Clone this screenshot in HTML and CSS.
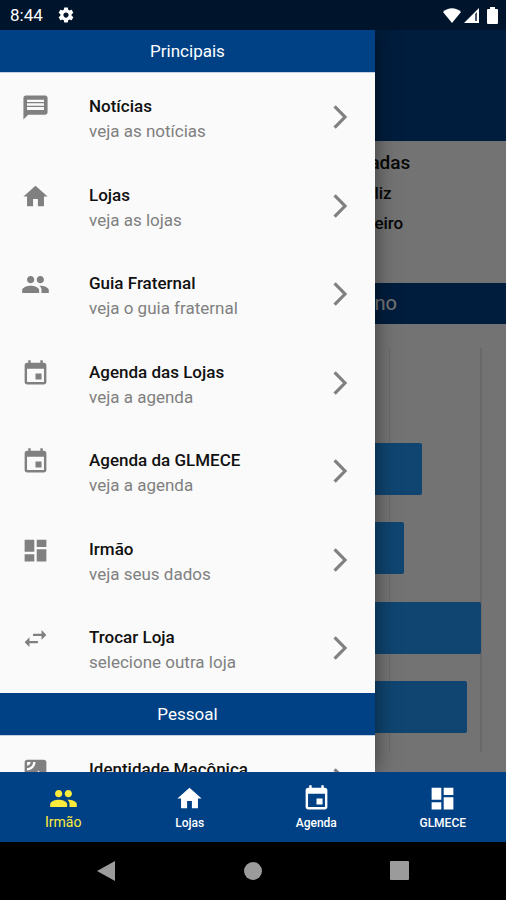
FILE: index.html
```html
<!DOCTYPE html>
<html lang="pt-BR">
<head>
    <meta charset="UTF-8">
    <meta name="viewport" content="width=device-width, initial-scale=1.0">
    <title>GLMECE</title>
    <link rel="stylesheet" href="styles.css">
</head>
<body>
    <svg class="sprite" aria-hidden="true">
        <symbol id="i-message" viewBox="0 0 24 24"><path d="M20 2H4c-1.100 0-1.990.9-1.990 2L2 22l4-4h14c1.100 0 2-.9 2-2V4c0-1.100-.9-2-2-2zm-1 12H5v-2.500h14zm0-3.500H5v-2h14zm0-3H5v-2h14z"/></symbol>
        <symbol id="i-home" viewBox="0 0 24 24"><path d="M10 20v-6h4v6h5v-8h3L12 3 2 12h3v8z"/></symbol>
        <symbol id="i-people" viewBox="0 0 24 24"><path d="M16 11c1.660 0 2.990-1.340 2.990-3S17.660 5 16 5s-3 1.340-3 3 1.340 3 3 3zM8 11c1.660 0 2.990-1.340 2.990-3S9.660 5 8 5 5 6.340 5 8s1.340 3 3 3zm0 2c-2.330 0-7 1.170-7 3.500V19h14v-2.500C15 14.170 10.330 13 8 13zm8 0c-.29 0-.62.02-.97.05 1.160.84 1.970 1.970 1.970 3.450V19h6v-2.500c0-2.330-4.670-3.500-7-3.500z"/></symbol>
        <symbol id="i-event" viewBox="0 0 24 24"><path d="M17 12h-5v5h5v-5zM16 1v2H8V1H6v2H5c-1.110 0-1.990.9-1.990 2L3 19c0 1.100.89 2 2 2h14c1.100 0 2-.9 2-2V5c0-1.100-.9-2-2-2h-1V1h-2zm3 18H5V8h14v11z"/></symbol>
        <symbol id="i-dashboard" viewBox="0 0 24 24"><path d="M3 13h8V3H3v10zm0 8h8v-6H3v6zm10 0h8V11h-8v10zm0-18v6h8V3h-8z"/></symbol>
        <symbol id="i-swap" viewBox="0 0 24 24"><path d="M6.990 11L3 15l3.990 4v-3H14v-2H6.990v-3zM21 9l-3.990-4v3H10v2h7.010v3L21 9z"/></symbol>
        <symbol id="i-satellite" viewBox="0 0 24 24"><path d="M19 3H5c-1.100 0-2 .9-2 2v14c0 1.100.9 2 2 2h14c1.100 0 2-.9 2-2V5c0-1.100-.9-2-2-2zM5 4.990h3C8 6.650 6.660 8 5 8V4.990zM5 12v-2c2.760 0 5-2.250 5-5.010h2C12 8.860 8.870 12 5 12zm0 6l3.500-4.500 2.500 3.010L14.500 12l4.500 6H5z"/></symbol>
        <symbol id="i-chevron" viewBox="0 0 24 24"><path d="M9.800 6.700L15 12l-5.200 5.300" fill="none" stroke="currentColor" stroke-width="1.600"/></symbol>
        <symbol id="i-gear" viewBox="0 0 24 24"><path d="M19.430 12.980c.04-.32.07-.64.07-.98s-.03-.66-.07-.98l2.110-1.650c.19-.15.24-.42.12-.64l-2-3.460c-.12-.22-.39-.3-.61-.22l-2.490 1c-.52-.4-1.080-.73-1.690-.98l-.38-2.650C14.460 2.180 14.250 2 14 2h-4c-.25 0-.46.18-.49.42l-.38 2.650c-.61.25-1.170.59-1.690.98l-2.490-1c-.23-.09-.49 0-.61.22l-2 3.460c-.13.22-.07.49.12.64l2.110 1.650c-.04.32-.07.65-.07.98s.03.66.07.98l-2.110 1.650c-.19.15-.24.42-.12.64l2 3.460c.12.22.39.3.61.22l2.490-1c.52.4 1.080.73 1.690.98l.38 2.650c.03.24.24.42.49.42h4c.25 0 .46-.18.49-.42l.38-2.650c.61-.25 1.170-.59 1.690-.98l2.490 1c.23.09.49 0 .61-.22l2-3.460c.12-.22.07-.49-.12-.64l-2.110-1.650zM12 15.500c-1.930 0-3.500-1.570-3.500-3.500s1.570-3.500 3.500-3.500 3.500 1.570 3.500 3.500-1.570 3.500-3.500 3.500z"/></symbol>
    </svg>

    <div class="phone">
        <header class="status-bar">
            <span class="clock">8:44</span>
            <svg class="gear"><use href="#i-gear"/></svg>
            <div class="status-icons">
                <svg class="wifi" viewBox="0 0 18 15"><path d="M0 4C5-1 13-1 18 4L9 15z"/></svg>
                <svg class="signal" viewBox="0 0 15 15"><path d="M0 15L15 0v15z"/><path class="signal-gap" d="M11 6l2-2v9h-2z"/></svg>
                <svg class="battery" viewBox="0 0 11 17"><path d="M3 0h5v2h2q1 0 1 1v13q0 1-1 1H1q-1 0-1-1V3q0-1 1-1h2z"/></svg>
            </div>
        </header>

        <div class="screen">
            <main class="page">
                <div class="app-bar"></div>
                <div class="summary">
                    <h2>adas</h2>
                    <p>liz</p>
                    <p>eiro</p>
                </div>
                <h3 class="chart-title">no</h3>
                <div class="chart">
                    <div class="plot">
                        <div class="bar" style="width: 60%"></div>
                        <div class="bar" style="width: 87%"></div>
                        <div class="bar" style="width: 83%"></div>
                        <div class="bar" style="width: 100%"></div>
                        <div class="bar" style="width: 97%"></div>
                    </div>
                </div>
            </main>
            <div class="scrim"></div>

            <nav class="drawer">
                <h2 class="section">Principais</h2>
                <div class="menu">
                    <a class="item" href="#"><svg class="icon"><use href="#i-message"/></svg><span class="text"><b>Notícias</b><small>veja as notícias</small></span><svg class="chevron"><use href="#i-chevron"/></svg></a>
                    <a class="item" href="#"><svg class="icon"><use href="#i-home"/></svg><span class="text"><b>Lojas</b><small>veja as lojas</small></span><svg class="chevron"><use href="#i-chevron"/></svg></a>
                    <a class="item" href="#"><svg class="icon"><use href="#i-people"/></svg><span class="text"><b>Guia Fraternal</b><small>veja o guia fraternal</small></span><svg class="chevron"><use href="#i-chevron"/></svg></a>
                    <a class="item" href="#"><svg class="icon"><use href="#i-event"/></svg><span class="text"><b>Agenda das Lojas</b><small>veja a agenda</small></span><svg class="chevron"><use href="#i-chevron"/></svg></a>
                    <a class="item" href="#"><svg class="icon"><use href="#i-event"/></svg><span class="text"><b>Agenda da GLMECE</b><small>veja a agenda</small></span><svg class="chevron"><use href="#i-chevron"/></svg></a>
                    <a class="item" href="#"><svg class="icon"><use href="#i-dashboard"/></svg><span class="text"><b>Irmão</b><small>veja seus dados</small></span><svg class="chevron"><use href="#i-chevron"/></svg></a>
                    <a class="item" href="#"><svg class="icon"><use href="#i-swap"/></svg><span class="text"><b>Trocar Loja</b><small>selecione outra loja</small></span><svg class="chevron"><use href="#i-chevron"/></svg></a>
                </div>
                <h2 class="section">Pessoal</h2>
                <a class="item" href="#"><svg class="icon"><use href="#i-satellite"/></svg><span class="text"><b>Identidade Maçônica</b></span><svg class="chevron"><use href="#i-chevron"/></svg></a>
            </nav>
        </div>

        <nav class="tabs">
            <button class="tab active"><svg><use href="#i-people"/></svg>Irmão</button>
            <button class="tab"><svg><use href="#i-home"/></svg>Lojas</button>
            <button class="tab"><svg><use href="#i-event"/></svg>Agenda</button>
            <button class="tab"><svg><use href="#i-dashboard"/></svg>GLMECE</button>
        </nav>

        <footer class="system-nav">
            <button aria-label="Voltar"><svg viewBox="0 0 20 22"><path d="M0 11L18 1v20z"/></svg></button>
            <button aria-label="Início"><svg viewBox="0 0 20 22"><circle cx="10" cy="11" r="9"/></svg></button>
            <button aria-label="Recentes"><svg viewBox="0 0 20 22"><rect x="1" y="1" width="19" height="19" rx="1"/></svg></button>
        </footer>
    </div>
</body>
</html>
```
FILE: styles.css
```css
* {
    box-sizing: border-box;
}
body {
    margin: 0;
    font-family: Roboto, sans-serif;
    background: #000;
}
h2, h3, p {
    margin: 0;
}
svg {
    fill: currentColor;
    flex-shrink: 0;
}
button {
    border: none;
    background: none;
    padding: 0;
    font-family: inherit;
    cursor: pointer;
}
.sprite {
    display: none;
}
.phone {
    display: flex;
    flex-direction: column;
    height: 100vh;
}

/* status bar */
.status-bar {
    display: flex;
    align-items: center;
    height: 30px;
    padding: 0 8px 0 10px;
    background: #00142b;
    color: #fff;
}
.clock {
    font-size: 17px;
    line-height: 32px;
}
.gear {
    width: 18px;
    height: 18px;
    margin-left: 14px;
}
.status-icons {
    display: flex;
    align-items: center;
    gap: 3px;
    margin-left: auto;
}
.wifi {
    width: 18px;
    height: 15px;
}
.signal {
    width: 15px;
    height: 15px;
}
.signal-gap {
    fill: #4b5766;
}
.battery {
    width: 11px;
    height: 17px;
    margin-left: 5px;
}

/* page under the drawer */
.screen {
    position: relative;
    flex: 1;
    min-height: 0;
    overflow: hidden;
}
.page {
    display: flex;
    flex-direction: column;
    height: 100%;
    background: #fafafa;
}
.app-bar {
    height: 111px;
    background: #004186;
}
.summary {
    height: 142px;
    padding: 7px 0 0 73%;
    color: #111;
}
.summary h2 {
    font-size: 19px;
    font-weight: 500;
    line-height: 30px;
}
.summary p {
    padding-left: 5px;
    font-size: 17px;
    font-weight: 500;
    line-height: 30px;
}
.chart-title {
    padding-left: 74%;
    background: #004186;
    color: #fff;
    font-size: 20px;
    font-weight: 400;
    line-height: 41px;
}
.chart {
    flex: 1;
    padding: 24px 24px 20px 26px;
}
.plot {
    display: flex;
    flex-direction: column;
    justify-content: space-between;
    height: 100%;
    padding: 15px 0 19px;
    border-right: 1px solid #e4e4e4;
    background: linear-gradient(to left, #e4e4e4 1px, transparent 1px) 0 0 / 20% 100%;
}
.bar {
    height: 52px;
    border-radius: 2px;
    background: #2196f3;
}
.scrim {
    position: absolute;
    inset: 0;
    background: rgba(0, 0, 0, 0.54);
}

/* drawer */
.drawer {
    position: absolute;
    top: 0;
    bottom: 0;
    left: 0;
    width: 74.1%;
    overflow: hidden;
    background: #fafafa;
    box-shadow: 0 0 20px rgba(0, 0, 0, 0.5);
}
.section {
    height: 43px;
    border-bottom: 1px solid #c3d0e4;
    background: #004186;
    color: #fff;
    font-size: 17px;
    font-weight: 400;
    line-height: 43px;
    text-align: center;
}
.menu {
    display: grid;
    grid-auto-rows: 1fr;
    height: 620px;
}
.item {
    display: flex;
    align-items: flex-start;
    min-height: 88px;
    padding: 20px 12px 0 21px;
    color: #808080;
    text-decoration: none;
}
.icon {
    width: 29px;
    height: 29px;
}
.text {
    flex: 1;
    padding: 1px 0 0 39px;
}
.text b {
    display: block;
    color: #111;
    font-size: 17px;
    font-weight: 500;
    line-height: 25px;
}
.text small {
    display: block;
    font-size: 17px;
    line-height: 25px;
}
.chevron {
    width: 48px;
    height: 48px;
}

/* bottom tabs */
.tabs {
    display: grid;
    grid-template-columns: repeat(4, 1fr);
    height: 70px;
    background: #004186;
}
.tab {
    display: flex;
    flex-direction: column;
    align-items: center;
    padding-top: 12px;
    color: #fff;
    font-size: 12px;
    font-weight: 500;
    line-height: 20px;
}
.tab svg {
    width: 29px;
    height: 29px;
}
.tab.active {
    color: #ffeb3b;
    font-size: 14px;
    font-weight: 400;
    line-height: 18px;
}
.system-nav {
    display: grid;
    grid-template-columns: repeat(3, 1fr);
    height: 58px;
    padding: 0 34px;
    background: #000;
}
.system-nav button {
    color: #9b9b9b;
}
.system-nav svg {
    display: block;
    width: 20px;
    height: 22px;
    margin: 0 auto;
}
```
